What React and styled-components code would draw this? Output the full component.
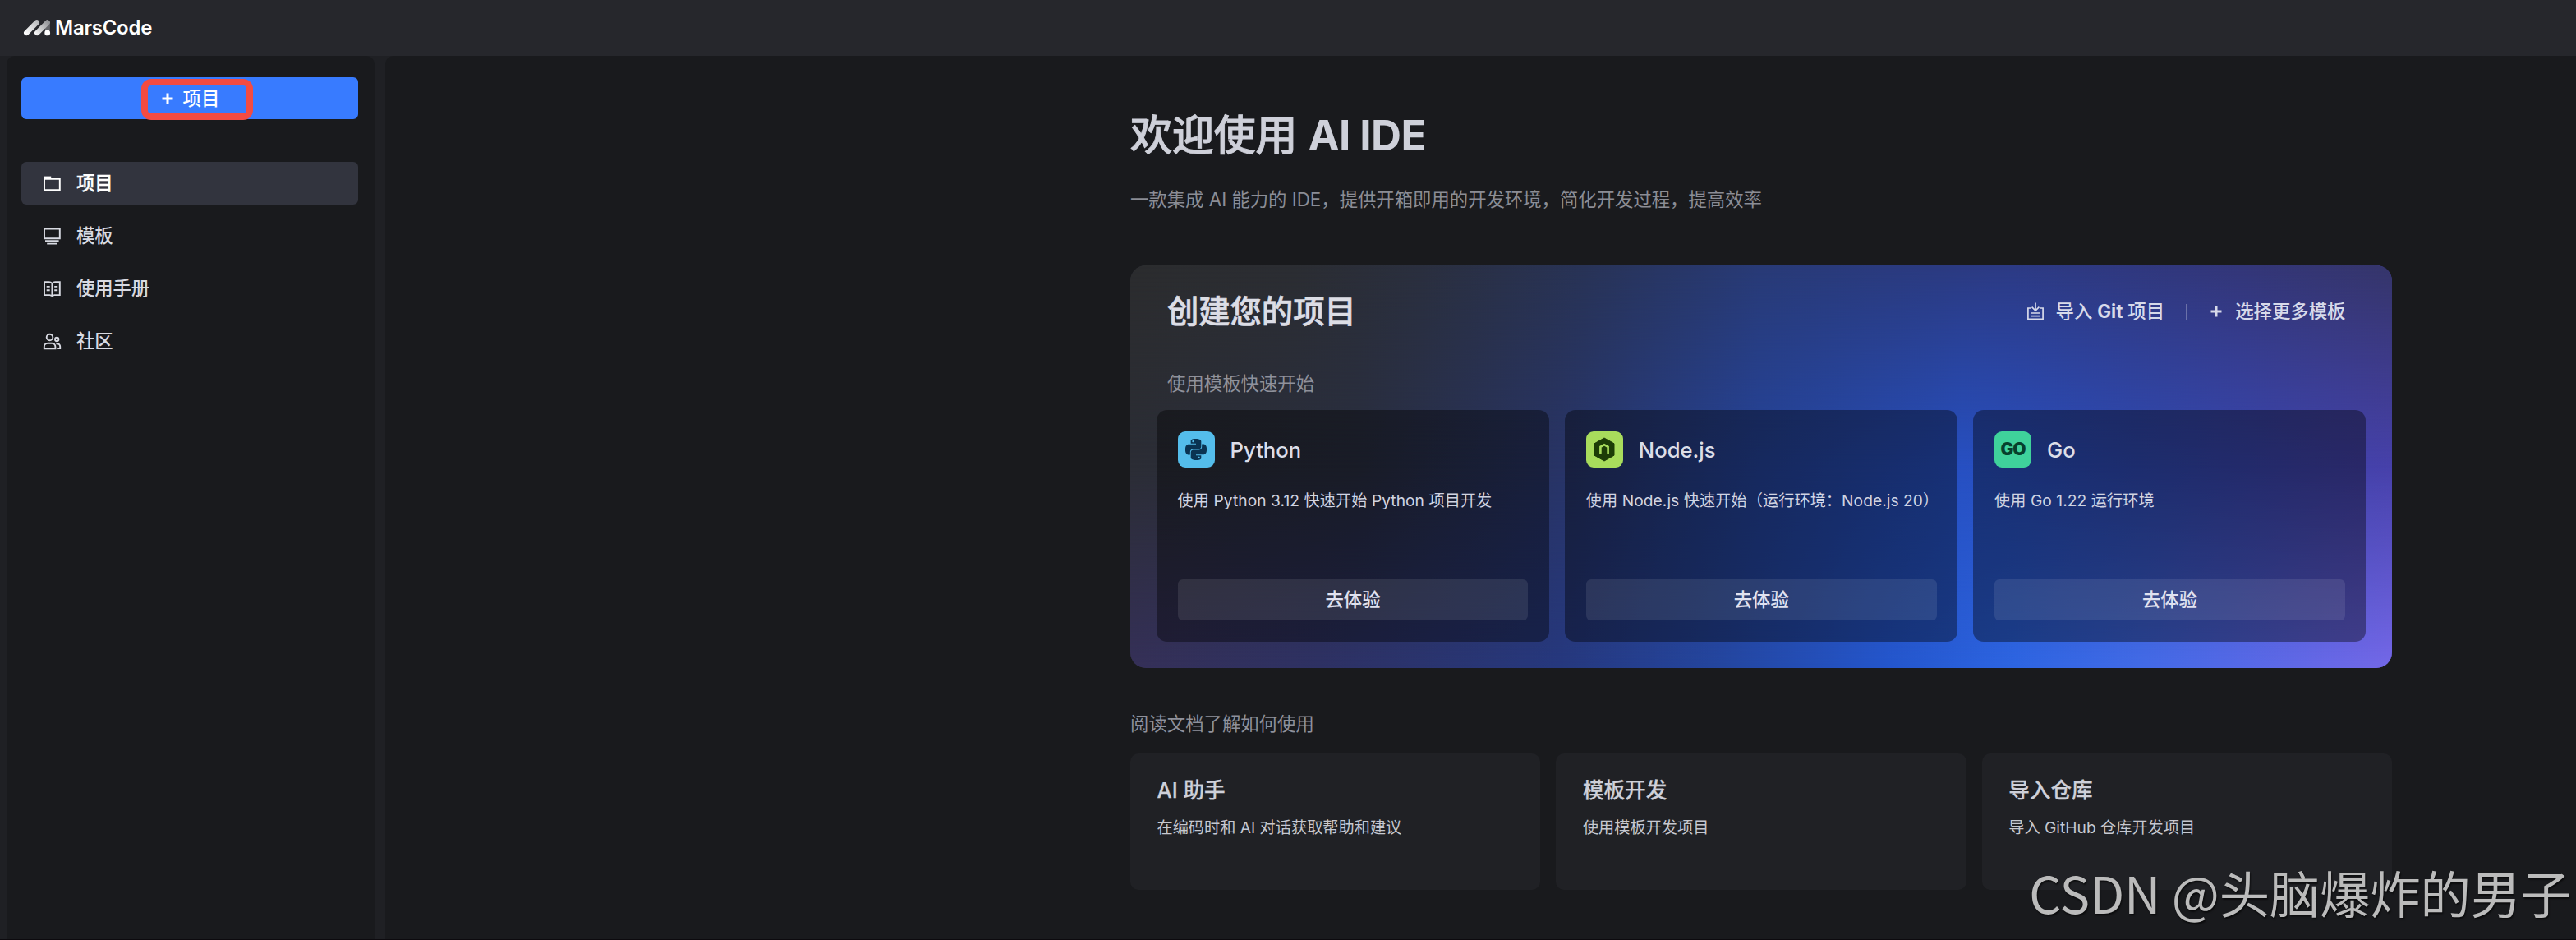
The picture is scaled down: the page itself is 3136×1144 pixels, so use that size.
import React from "react";
import styled, { createGlobalStyle } from "styled-components";
import { SiPython } from "react-icons/si";

const GlobalStyle = createGlobalStyle`
  * { box-sizing: border-box; }
  body {
    margin: 0;
    background: #1f2024;
    font-family: Inter, "Noto Sans CJK SC", sans-serif;
    color: #ced0d9;
  }
`;

const Page = styled.div`
  position: relative;
  display: flex;
  flex-direction: column;
  height: 1144px;
  overflow: hidden;
  background: #1f2024;
  border-bottom: 1px solid #0c0a0e;
`;

const Header = styled.header`
  display: flex;
  align-items: center;
  flex: none;
  height: 68px;
  padding-left: 28px;
  gap: 5px;
  background: #26272c;
`;

const Brand = styled.span`
  font-size: 24px;
  line-height: 30px;
  font-weight: 600;
  letter-spacing: -0.25px;
  color: #fff;
`;

const Body = styled.div`
  display: flex;
  flex: 1;
  gap: 13px;
  padding-left: 8px;
`;

const Sidebar = styled.aside`
  display: flex;
  flex-direction: column;
  flex: none;
  width: 448px;
  padding: 26px 20px 0 18px;
  border-radius: 10px 10px 0 0;
  background: #191a1d;
`;

const NewButton = styled.button`
  display: flex;
  align-items: center;
  justify-content: center;
  gap: 12px;
  height: 51px;
  padding: 0 0 0 2px;
  border: 0;
  border-radius: 6px;
  background: #387bff;
  color: #fff;
  font: inherit;
  font-size: 22.4px;
  font-weight: 500;
  line-height: 32px;
`;

const Highlight = styled.div`
  position: absolute;
  left: 172px;
  top: 96px;
  width: 136px;
  height: 50px;
  border: 8px solid #f34b42;
  border-radius: 12px;
`;

const Divider = styled.hr`
  width: 100%;
  height: 1px;
  margin: 26px 0 25px;
  border: 0;
  background: #25262a;
`;

const Nav = styled.nav`
  display: flex;
  flex-direction: column;
  gap: 12px;
`;

const NavItem = styled.a`
  display: flex;
  align-items: center;
  gap: 18px;
  height: 52px;
  padding-left: 26px;
  border-radius: 6px;
  background: ${(p) => (p.$active ? "#32343e" : "transparent")};
  color: ${(p) => (p.$active ? "#fff" : "#d8dae2")};
  font-size: 22.4px;
  line-height: 32px;
  font-weight: 500;
  letter-spacing: -0.1px;
  -webkit-text-stroke: ${(p) => (p.$active ? 0.3 : 0)}px currentColor;
`;

const Main = styled.main`
  display: flex;
  flex-direction: column;
  flex: 1;
  padding: 61px 224px 0 907px;
  border-radius: 10px 0 0 0;
  background: #191a1d;
`;

const Title = styled.h1`
  margin: 0;
  font-size: 51.2px;
  line-height: 70px;
  font-weight: 500;
  letter-spacing: -0.4px;
  color: #ced0d9;
  -webkit-text-stroke: 0.8px currentColor;

  b {
    font-weight: 700;
    letter-spacing: -0.6px;
    -webkit-text-stroke: 0;
  }
`;

const Subtitle = styled.p`
  margin: 28px 0 0;
  font-size: 22.4px;
  line-height: 32px;
  letter-spacing: -0.03px;
  color: #8b8d95;
`;

const Hero = styled.section`
  position: relative;
  isolation: isolate;
  display: flex;
  flex-direction: column;
  height: 490px;
  margin-top: 64px;
  padding: 28px 31.5px 0 32px;
  border-radius: 19px;
  overflow: hidden;
  background: linear-gradient(90deg, #2b2d35 0%, #292e40 18%, #283466 34%, #25449c 50%, #2750c2 66%, #304ab4 80%, #4741aa 100%);

  &::before,
  &::after {
    content: "";
    position: absolute;
    inset: 0;
    z-index: -1;
  }
  &::before {
    background: linear-gradient(90deg, #2b2c2e 0%, #2b2d32 13%, #2a2f3e 23%, #283356 36%, #283a76 50%, #2c3a84 70%, #333678 88%, #35356a 100%);
    mask-image: linear-gradient(180deg, #000 0%, transparent 50%);
  }
  &::after {
    background: linear-gradient(90deg, #353058 0%, #2e3164 15%, #26387e 34%, #2446a0 47%, #2456cc 60%, #2d65e2 70%, #426be7 80%, #7468e8 100%);
    mask-image: linear-gradient(0deg, #000 0%, transparent 50%);
  }
`;

const HeroHead = styled.div`
  display: flex;
  align-items: center;
  justify-content: space-between;
  height: 56px;
  padding: 0 25px 0 13px;
`;

const HeroTitle = styled.h2`
  margin: 0;
  font-size: 38.4px;
  line-height: 56px;
  font-weight: 500;
  letter-spacing: -0.1px;
  color: #dcdde5;
  -webkit-text-stroke: 0.6px currentColor;
`;

const Actions = styled.div`
  display: flex;
  align-items: center;
  color: #d7daea;
`;

const Action = styled.a`
  display: flex;
  align-items: center;
  gap: ${(p) => p.$gap}px;
  font-size: 22.4px;
  line-height: 32px;
  font-weight: 500;

  b { font-weight: 700; }
`;

const Separator = styled.span`
  width: 2px;
  height: 19px;
  margin: 0 28px 0 26px;
  background: rgba(255, 255, 255, 0.28);
`;

const Label = styled.p`
  margin: ${(p) => p.$margin};
  font-size: 22.4px;
  line-height: 32px;
  color: #8f919b;
`;

const Templates = styled.div`
  display: grid;
  grid-template-columns: repeat(3, minmax(0, 1fr));
  gap: 19.2px;
`;

const Template = styled.article`
  display: flex;
  flex-direction: column;
  height: 282px;
  padding: 26px 25.6px;
  border-radius: 12.8px;
  background: rgba(0, 0, 0, 0.39);
`;

const TemplateHead = styled.div`
  display: flex;
  align-items: center;
  gap: 19px;
  height: 44px;
`;

const Tile = styled.span`
  display: flex;
  align-items: center;
  justify-content: center;
  width: 45px;
  height: 44px;
  border-radius: 9px;
  background: ${(p) => p.$bg};
  color: ${(p) => p.$fg};
`;

const TemplateName = styled.h3`
  margin: 2px 0 0;
  font-size: 25.6px;
  line-height: 36px;
  font-weight: 500;
  color: #dcdee8;
`;

const TemplateText = styled.p`
  margin: 26px 0 0;
  font-size: 19.2px;
  line-height: 28px;
  letter-spacing: 0.05px;
  white-space: nowrap;
  color: #d0d4e2;
`;

const TryButton = styled.button`
  height: 50px;
  margin-top: auto;
  padding: 0;
  border: 0;
  border-radius: 6px;
  background: rgba(255, 255, 255, 0.095);
  color: #e0e2f0;
  font: inherit;
  font-size: 22.4px;
  line-height: 32px;
  font-weight: 500;
`;

const Docs = styled.div`
  display: grid;
  grid-template-columns: repeat(3, minmax(0, 1fr));
  gap: 19.2px;
`;

const Doc = styled.article`
  height: 166px;
  padding: 27px 32.5px 0;
  border-radius: 10px;
  background: #202125;
`;

const DocTitle = styled.h3`
  margin: 0;
  font-size: 25.6px;
  line-height: 36px;
  font-weight: 500;
  color: #ced0d9;
  -webkit-text-stroke: 0.25px currentColor;
`;

const DocText = styled.p`
  margin: 13px 0 0;
  font-size: 19.2px;
  line-height: 28px;
  color: #c6c8d0;
`;

const Watermark = styled.div`
  position: absolute;
  right: 6px;
  bottom: 12px;
  font-family: "Noto Sans CJK SC", sans-serif;
  font-size: 61.4px;
  line-height: 90px;
  letter-spacing: -0.2px;
  white-space: nowrap;
  color: #bbb;
  text-shadow: 1px 2px 2px rgba(0, 0, 0, 0.6);
`;

const GoMark = styled.span`
  font-size: 21px;
  line-height: 44px;
  font-weight: 900;
  letter-spacing: -1px;
`;

const Logo = () => (
  <svg width="34" height="22" viewBox="28 23 34 22" fill="none" strokeLinecap="round">
    <defs>
      <linearGradient id="rod1" x1="31" y1="41" x2="46" y2="26" gradientUnits="userSpaceOnUse">
        <stop stopColor="#fff" />
        <stop offset="1" stopColor="#b9babd" />
      </linearGradient>
      <linearGradient id="rod2" x1="44" y1="41" x2="58" y2="27" gradientUnits="userSpaceOnUse">
        <stop stopColor="#f4f4f4" />
        <stop offset="1" stopColor="#96979b" />
      </linearGradient>
    </defs>
    <path d="M57.9 28v8" stroke="#66676c" strokeWidth="6" strokeLinecap="butt" />
    <path d="M32.2 39.9 44.8 27.3" stroke="url(#rod1)" strokeWidth="6.3" />
    <path d="M45.2 39.9 57.7 27.4" stroke="url(#rod2)" strokeWidth="6.3" />
    <circle cx="57.7" cy="39.9" r="3.4" fill="#fff" />
  </svg>
);

const Plus = () => (
  <svg width="14" height="14" viewBox="0 0 14 14" stroke="currentColor" strokeWidth="3">
    <path d="M7 .5v13M.5 7h13" />
  </svg>
);

const NavSvg = ({ children }) => (
  <svg width="23" height="23" viewBox="0 0 23 23" fill="none" stroke="currentColor" strokeWidth="1.9">
    {children}
  </svg>
);

const FolderIcon = () => (
  <NavSvg>
    <path d="M2 4.6V19.2H20.8V5.9H2" />
    <path d="M1.2 4h9" strokeWidth="2.8" />
  </NavSvg>
);

const TemplateIcon = () => (
  <NavSvg>
    <path d="M2 2.5h18.8v11.8H2zM3 17.3h16.6M5.2 20.6h12" />
  </NavSvg>
);

const ManualIcon = () => (
  <NavSvg>
    <path d="M11.4 5C10.3 3.7 9 3.3 7.6 3.3H2v15.8h6.6c1 0 1.4 1 2.8 1s1.8-1 2.8-1h6.6V3.3h-5.6c-1.4 0-2.7.4-3.8 1.7zM11.4 5v15M4.7 8.9h4M4.7 13.2h4M14.2 8.9h4M14.2 13.2h4" />
  </NavSvg>
);

const CommunityIcon = () => (
  <NavSvg>
    <circle cx="8.5" cy="6.5" r="3.8" />
    <circle cx="17.2" cy="9" r="2.2" />
    <path d="M1.8 20.2v-2.3a4.2 4.2 0 0 1 4.2-4.2h5.2a4.2 4.2 0 0 1 4.2 4.2v2.3zM16.4 14.2h1.2a3.6 3.6 0 0 1 3.6 3.6v2.2h-3" />
  </NavSvg>
);

const ImportIcon = () => (
  <svg width="22" height="22" viewBox="0 0 22 22" fill="none" stroke="currentColor" strokeWidth="1.7">
    <path d="M5.5 7H1.9v13.3h18.2V7h-3.6M11 .6v9M6.6 5.6 11 10l4.4-4.4M6 13h10M6 16.6h10" />
  </svg>
);

const NodeIcon = () => (
  <svg width="28" height="30" viewBox="0 0 28 30">
    <path d="M14 1 26 7.8v14.4L14 29 2 22.2V7.8z" fill="currentColor" stroke="currentColor" strokeWidth="1" strokeLinejoin="round" />
    <path d="M9.4 20.8v-9L14 9.2l4.6 2.6v9" fill="none" stroke="#a8dc5c" strokeWidth="2.6" />
    <path d="M12.3 14.2h3.4v4.4l3 2.6L14 24l-4.7-2.8 3-2.6z" fill="currentColor" />
  </svg>
);

const NAV = [
  { label: "项目", Icon: FolderIcon, active: true },
  { label: "模板", Icon: TemplateIcon },
  { label: "使用手册", Icon: ManualIcon },
  { label: "社区", Icon: CommunityIcon },
];

const TEMPLATES = [
  { name: "Python", text: "使用 Python 3.12 快速开始 Python 项目开发", bg: "#54bdeb", fg: "#0a3352", icon: <SiPython size={26} /> },
  { name: "Node.js", text: "使用 Node.js 快速开始（运行环境：Node.js 20）", bg: "#a8dc5c", fg: "#1d3d07", icon: <NodeIcon /> },
  { name: "Go", text: "使用 Go 1.22 运行环境", bg: "#3fd29b", fg: "#07402d", icon: <GoMark>GO</GoMark> },
];

const DOCS = [
  { title: "AI 助手", text: "在编码时和 AI 对话获取帮助和建议" },
  { title: "模板开发", text: "使用模板开发项目" },
  { title: "导入仓库", text: "导入 GitHub 仓库开发项目" },
];

export default function App() {
  return (
    <>
      <GlobalStyle />
      <Page>
        <Header>
          <Logo />
          <Brand>MarsCode</Brand>
        </Header>
        <Body>
          <Sidebar>
            <NewButton>
              <Plus />
              <span>项目</span>
            </NewButton>
            <Divider />
            <Nav>
              {NAV.map(({ label, Icon, active }) => (
                <NavItem key={label} $active={active}>
                  <Icon />
                  <span>{label}</span>
                </NavItem>
              ))}
            </Nav>
          </Sidebar>
          <Main>
            <Title>欢迎使用 <b>AI IDE</b></Title>
            <Subtitle>一款集成 AI 能力的 IDE，提供开箱即用的开发环境，简化开发过程，提高效率</Subtitle>
            <Hero>
              <HeroHead>
                <HeroTitle>创建您的项目</HeroTitle>
                <Actions>
                  <Action $gap={14}>
                    <ImportIcon />
                    <span>导入 <b>Git</b> 项目</span>
                  </Action>
                  <Separator />
                  <Action $gap={16}>
                    <Plus />
                    <span>选择更多模板</span>
                  </Action>
                </Actions>
              </HeroHead>
              <Label $margin="44px 0 16px 13px">使用模板快速开始</Label>
              <Templates>
                {TEMPLATES.map((t) => (
                  <Template key={t.name}>
                    <TemplateHead>
                      <Tile $bg={t.bg} $fg={t.fg}>{t.icon}</Tile>
                      <TemplateName>{t.name}</TemplateName>
                    </TemplateHead>
                    <TemplateText>{t.text}</TemplateText>
                    <TryButton>去体验</TryButton>
                  </Template>
                ))}
              </Templates>
            </Hero>
            <Label $margin="52px 0 20px">阅读文档了解如何使用</Label>
            <Docs>
              {DOCS.map((d) => (
                <Doc key={d.title}>
                  <DocTitle>{d.title}</DocTitle>
                  <DocText>{d.text}</DocText>
                </Doc>
              ))}
            </Docs>
          </Main>
        </Body>
        <Highlight />
        <Watermark>CSDN @头脑爆炸的男子</Watermark>
      </Page>
    </>
  );
}
